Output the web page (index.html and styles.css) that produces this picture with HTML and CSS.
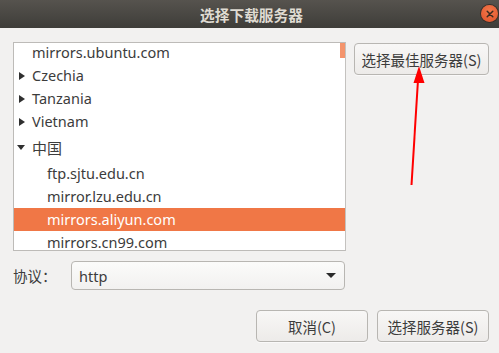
FILE: index.html
```html
<!DOCTYPE html>
<html lang="zh">
<head>
<meta charset="utf-8">
<title>选择下载服务器</title>
<link rel="stylesheet" href="styles.css">
</head>
<body>
<div class="window">
  <header class="titlebar">
    <span class="title">选择下载服务器</span>
    <span class="close"><svg width="16" height="16" viewBox="0 0 16 16"><path d="M5.2 5.2 L10.8 10.8 M10.8 5.2 L5.2 10.8" stroke="#3a2a20" stroke-width="1.5" stroke-linecap="round"/></svg></span>
  </header>
  <main class="content">
    <div class="top">
      <div class="list">
        <div class="scrollthumb"></div>
        <div class="rows">
          <div class="row leaf0">mirrors.ubuntu.com</div>
          <div class="row"><span class="exp right"></span>Czechia</div>
          <div class="row"><span class="exp right"></span>Tanzania</div>
          <div class="row"><span class="exp right"></span>Vietnam</div>
          <div class="row cjk"><span class="exp down"></span>中国</div>
          <div class="row leaf1">ftp.sjtu.edu.cn</div>
          <div class="row leaf1">mirror.lzu.edu.cn</div>
          <div class="row leaf1 selected">mirrors.aliyun.com</div>
          <div class="row leaf1">mirrors.cn99.com</div>
        </div>
      </div>
      <div class="side">
        <button class="btn best">选择最佳服务器(S)</button>
      </div>
    </div>
    <div class="proto">
      <span class="label">协议：</span>
      <div class="combo"><span>http</span><span class="caret"></span></div>
    </div>
    <div class="actions">
      <button class="btn act">取消(C)</button>
      <button class="btn act">选择服务器(S)</button>
    </div>
  </main>
  <svg class="arrow" width="499" height="353" viewBox="0 0 499 353">
    <line x1="411.5" y1="185" x2="418" y2="80" stroke="#ff0000" stroke-width="2"/>
    <polygon points="419,66 424.5,83 413.5,83" fill="#ff0000"/>
  </svg>
</div>
</body>
</html>
```
FILE: styles.css
```css
* { box-sizing: border-box; }
html, body { margin: 0; padding: 0; }
body {
  width: 499px;
  height: 353px;
  overflow: hidden;
  background: #f2f1f0;
  font-family: "Noto Sans", "Noto Sans CJK SC", sans-serif;
  font-size: 14.5px;
  color: #3c3c3c;
}
.window { position: relative; width: 499px; height: 353px; }
.titlebar {
  height: 28px;
  background: linear-gradient(#56534e, #3e3d39);
  display: flex;
  align-items: center;
  justify-content: center;
  position: relative;
}
.title {
  color: #dfdbd2;
  font-weight: bold;
  font-size: 14.7px;
  font-family: "Noto Sans CJK SC", "Noto Sans", sans-serif;
  letter-spacing: 0;
  margin-left: 4px;
}
.close {
  position: absolute;
  left: 481px;
  top: 5px;
  width: 17px;
  height: 17px;
  border-radius: 50%;
  background: radial-gradient(circle at 50% 35%, #f3784a, #e0512a);
  box-shadow: 0 0 0 1px #3a2f28;
  display: flex;
  align-items: center;
  justify-content: center;
}
.content {
  padding: 14px 10px 0 13px;
  display: flex;
  flex-direction: column;
}
.top { display: flex; gap: 8px; }
.list {
  position: relative;
  width: 333px;
  height: 209px;
  background: #ffffff;
  border: 1px solid #bdbbb8;
  border-right-color: #c4c2bf;
  overflow: hidden;
}
.rows { margin-top: -2px; }
.scrollthumb {
  position: absolute;
  right: 0;
  top: 0;
  width: 5px;
  height: 15px;
  background: #f4946c;
  z-index: 2;
}
.row {
  height: 23px;
  line-height: 23px;
  padding-left: 18px;
  display: flex;
  align-items: center;
  white-space: nowrap;
}
.row.leaf0 { padding-left: 18px; }
.row.leaf1 { padding-left: 33px; }
.row.cjk { height: 29px; padding-left: 3px; font-family: "Noto Sans CJK SC", sans-serif; font-size: 15px; }
.row.selected { background: #f07746; color: #ffffff; }
.exp { display: inline-block; width: 0; height: 0; }
.exp.right {
  margin-left: -13px;
  margin-right: 7px;
  border-top: 4px solid transparent;
  border-bottom: 4px solid transparent;
  border-left: 6px solid #2f2f2f;
}
.exp.down {
  margin-right: 7px;
  border-left: 4px solid transparent;
  border-right: 4px solid transparent;
  border-top: 5px solid #2f2f2f;
}
.side { padding-top: 1px; }
.btn {
  font-family: "Noto Sans CJK SC", "Noto Sans", sans-serif;
  font-size: 14.5px;
  color: #3c3c3c;
  height: 32px;
  border: 1px solid #b8b6b2;
  border-radius: 4px;
  background: linear-gradient(#f8f7f6, #edebe9);
  box-shadow: 0 1px 0 rgba(255,255,255,0.6);
  padding: 0;
}
.best { width: 135px; }
.proto {
  margin-top: 10px;
  display: flex;
  align-items: center;
  height: 29px;
}
.label {
  width: 58px;
  font-family: "Noto Sans CJK SC", sans-serif;
  font-size: 14.5px;
}
.combo {
  width: 274px;
  height: 29px;
  border: 1px solid #b8b6b2;
  border-radius: 4px;
  background: linear-gradient(#fbfbfa, #f2f1f0);
  display: flex;
  align-items: center;
  justify-content: space-between;
  padding: 0 8px 0 7px;
}
.caret {
  width: 0;
  height: 0;
  border-left: 5px solid transparent;
  border-right: 5px solid transparent;
  border-top: 5px solid #2a2a2a;
}
.actions {
  margin-top: 20px;
  display: flex;
  justify-content: flex-end;
  gap: 9px;
}
.act { width: 112px; }
.arrow { position: absolute; left: 0; top: 0; pointer-events: none; }
```
